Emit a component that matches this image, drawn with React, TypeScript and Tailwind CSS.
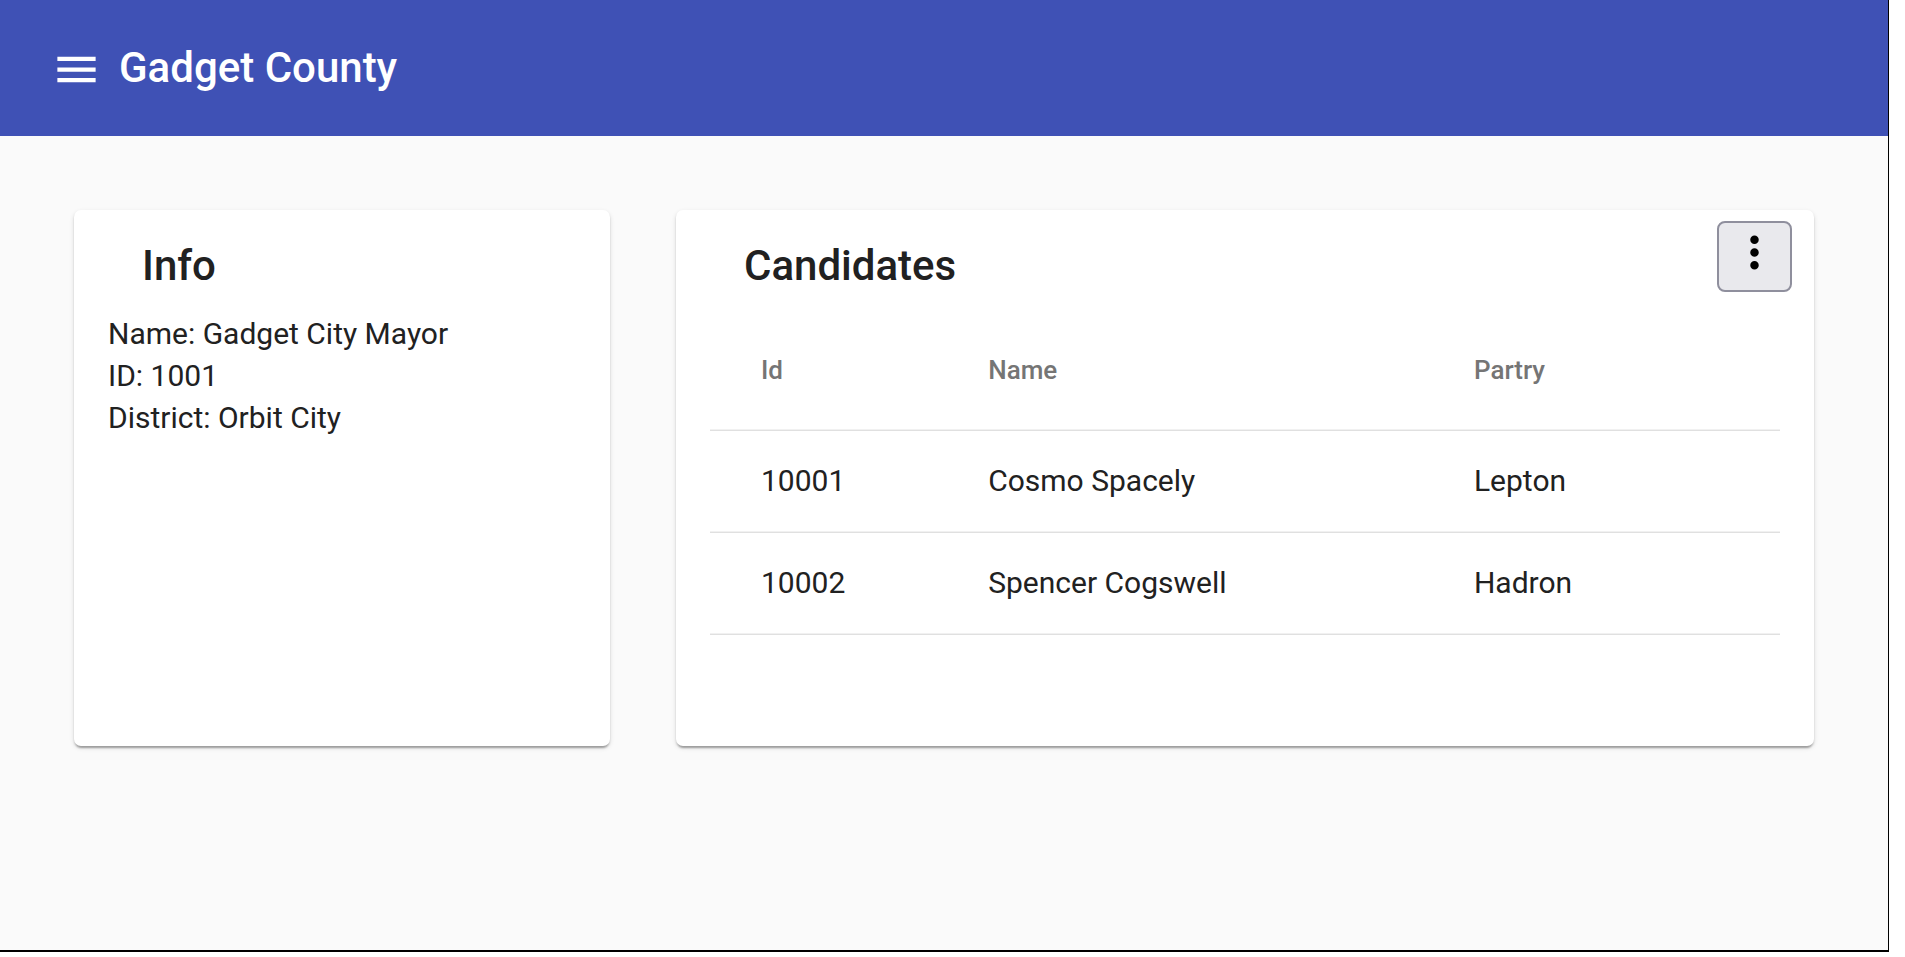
import type { ReactNode } from "react";

const candidates = [
  { id: "10001", name: "Cosmo Spacely", party: "Lepton" },
  { id: "10002", name: "Spencer Cogswell", party: "Hadron" },
];

function MenuIcon() {
  return (
    <svg viewBox="0 0 24 24" className="size-[51px]" fill="currentColor" aria-hidden="true">
      <path d="M3 18h18v-2H3v2zm0-5h18v-2H3v2zm0-7v2h18V6H3z" />
    </svg>
  );
}

function MoreIcon() {
  return (
    <svg viewBox="0 0 24 24" className="size-[51px]" fill="currentColor" aria-hidden="true">
      <path d="M12 8c1.1 0 2-.9 2-2s-.9-2-2-2-2 .9-2 2 .9 2 2 2zm0 2c-1.1 0-2 .9-2 2s.9 2 2 2 2-.9 2-2-.9-2-2-2zm0 6c-1.1 0-2 .9-2 2s.9 2 2 2 2-.9 2-2-.9-2-2-2z" />
    </svg>
  );
}

function Card({ title, action, className, children }: { title: string; action?: ReactNode; className?: string; children: ReactNode }) {
  return (
    <section
      className={`min-h-[536px] rounded-[7px] bg-white px-[34px] pt-[11px] shadow-[0_4px_2px_-2px_rgba(0,0,0,0.2),0_2px_2px_0_rgba(0,0,0,0.14),0_2px_5px_0_rgba(0,0,0,0.12)] ${className ?? ""}`}
    >
      <div className="flex h-[88px] items-start justify-between">
        <h2 className="pt-[18px] pl-[34px] text-[42px] leading-[54px] font-medium">{title}</h2>
        {action}
      </div>
      {children}
    </section>
  );
}

export default function App() {
  return (
    <div className="min-h-screen bg-white pr-4 pb-[5px] font-['Roboto',sans-serif] text-[#212121]">
      <div className="flex min-h-[952px] flex-col border-r border-b-2 border-black bg-[#fafafa]">
        <header className="flex h-[136px] items-center gap-[17px] bg-[#3f51b5] px-[51px] text-white">
          <button type="button" aria-label="Open menu" className="pt-[3px]">
            <MenuIcon />
          </button>
          <h1 className="text-[42px] leading-[54px] font-medium">Gadget County</h1>
        </header>
        <main className="grid grid-cols-3 gap-[66px] px-[74px] py-[74px]">
          <Card title="Info">
            <div className="pt-1 text-[30px] leading-[42px]">
              <p>Name: Gadget City Mayor</p>
              <p>ID: 1001</p>
              <p>District: Orbit City</p>
            </div>
          </Card>
          <Card
            title="Candidates"
            className="col-span-2"
            action={
              <button
                type="button"
                aria-label="More options"
                className="-mr-3 flex h-[71px] w-[75px] justify-center rounded-[8px] border-2 border-[#8f8f9d] bg-[#e9e9ed] pt-1 text-black"
              >
                <MoreIcon />
              </button>
            }
          >
            <table className="w-full table-fixed border-separate border-spacing-0 text-left [&_td]:border-b [&_td]:border-[#e0e0e0] [&_td]:shadow-[inset_0_-1px_0_#f1f1f1] [&_th]:border-b [&_th]:border-[#e0e0e0] [&_th]:shadow-[inset_0_-1px_0_#f1f1f1]">
              <colgroup>
                <col className="w-[26%]" />
                <col className="w-[45.4%]" />
                <col />
              </colgroup>
              <thead>
                <tr className="h-[122px] text-[26px] leading-[32px] text-[#757575]">
                  <th className="pl-[51px] font-medium">Id</th>
                  <th className="font-medium">Name</th>
                  <th className="font-medium">Partry</th>
                </tr>
              </thead>
              <tbody>
                {candidates.map((c) => (
                  <tr key={c.id} className="h-[102px] text-[30px] leading-[36px] [&_td]:pb-[2px]">
                    <td className="pl-[51px]">{c.id}</td>
                    <td>{c.name}</td>
                    <td>{c.party}</td>
                  </tr>
                ))}
              </tbody>
            </table>
          </Card>
        </main>
      </div>
    </div>
  );
}
